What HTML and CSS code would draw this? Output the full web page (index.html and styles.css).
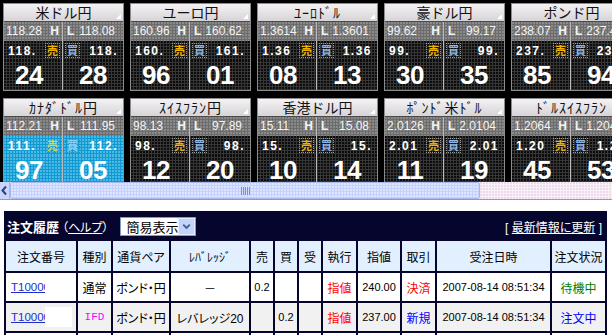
FILE: index.html
```html
<!DOCTYPE html>
<html lang="ja">
<head>
<meta charset="utf-8">
<title>レート・注文履歴</title>
<link rel="stylesheet" href="styles.css">
</head>
<body>
<div class="board">
  <div class="tiles">
    <div class="trow">
      <div class="tile">
        <div class="tname">米ドル円</div>
        <div class="hl"><div class="a"><span>118.28</span><b>H</b></div><div class="b"><b>L</b><span>118.08</span></div></div>
        <div class="px"><div class="a"><span>118.</span><span class="mk sell">売</span></div><div class="b"><span class="mk buy">買</span><span>118.</span></div></div>
        <div class="big"><div class="a">24</div><div class="b">28</div></div>
      </div>
      <div class="tile">
        <div class="tname">ユーロ円</div>
        <div class="hl"><div class="a"><span>160.96</span><b>H</b></div><div class="b"><b>L</b><span>160.62</span></div></div>
        <div class="px"><div class="a"><span>160.</span><span class="mk sell">売</span></div><div class="b"><span class="mk buy">買</span><span>161.</span></div></div>
        <div class="big"><div class="a">96</div><div class="b">01</div></div>
      </div>
      <div class="tile">
        <div class="tname hw">ﾕｰﾛﾄﾞﾙ</div>
        <div class="hl"><div class="a"><span>1.3614</span><b>H</b></div><div class="b"><b>L</b><span>1.3601</span></div></div>
        <div class="px"><div class="a"><span>1.36</span><span class="mk sell">売</span></div><div class="b"><span class="mk buy">買</span><span>1.36</span></div></div>
        <div class="big"><div class="a">08</div><div class="b">13</div></div>
      </div>
      <div class="tile">
        <div class="tname">豪ドル円</div>
        <div class="hl"><div class="a"><span>99.62</span><b>H</b></div><div class="b"><b>L</b><span>99.17</span></div></div>
        <div class="px"><div class="a"><span>99.</span><span class="mk sell">売</span></div><div class="b"><span class="mk buy">買</span><span>99.</span></div></div>
        <div class="big"><div class="a">30</div><div class="b">35</div></div>
      </div>
      <div class="tile">
        <div class="tname">ポンド円</div>
        <div class="hl"><div class="a"><span>238.07</span><b>H</b></div><div class="b"><b>L</b><span>237.45</span></div></div>
        <div class="px"><div class="a"><span>237.</span><span class="mk sell">売</span></div><div class="b"><span class="mk buy">買</span><span>237.</span></div></div>
        <div class="big"><div class="a">85</div><div class="b">94</div></div>
      </div>
    </div>
    <div class="trow">
      <div class="tile hot">
        <div class="tname hw">ｶﾅﾀﾞﾄﾞﾙ円</div>
        <div class="hl"><div class="a"><span>112.21</span><b>H</b></div><div class="b"><b>L</b><span>111.95</span></div></div>
        <div class="px"><div class="a"><span>111.</span><span class="mk sell">売</span></div><div class="b"><span class="mk buy">買</span><span>112.</span></div></div>
        <div class="big"><div class="a">97</div><div class="b">05</div></div>
      </div>
      <div class="tile">
        <div class="tname hw">ｽｲｽﾌﾗﾝ円</div>
        <div class="hl"><div class="a"><span>98.13</span><b>H</b></div><div class="b"><b>L</b><span>97.89</span></div></div>
        <div class="px"><div class="a"><span>98.</span><span class="mk sell">売</span></div><div class="b"><span class="mk buy">買</span><span>98.</span></div></div>
        <div class="big"><div class="a">12</div><div class="b">20</div></div>
      </div>
      <div class="tile">
        <div class="tname">香港ドル円</div>
        <div class="hl"><div class="a"><span>15.11</span><b>H</b></div><div class="b"><b>L</b><span>15.08</span></div></div>
        <div class="px"><div class="a"><span>15.</span><span class="mk sell">売</span></div><div class="b"><span class="mk buy">買</span><span>15.</span></div></div>
        <div class="big"><div class="a">10</div><div class="b">14</div></div>
      </div>
      <div class="tile">
        <div class="tname hw">ﾎﾟﾝﾄﾞ米ﾄﾞﾙ</div>
        <div class="hl"><div class="a"><span>2.0126</span><b>H</b></div><div class="b"><b>L</b><span>2.0104</span></div></div>
        <div class="px"><div class="a"><span>2.01</span><span class="mk sell">売</span></div><div class="b"><span class="mk buy">買</span><span>2.01</span></div></div>
        <div class="big"><div class="a">11</div><div class="b">19</div></div>
      </div>
      <div class="tile">
        <div class="tname hw">ﾄﾞﾙｽｲｽﾌﾗﾝ</div>
        <div class="hl"><div class="a"><span>1.2064</span><b>H</b></div><div class="b"><b>L</b><span>1.2049</span></div></div>
        <div class="px"><div class="a"><span>1.20</span><span class="mk sell">売</span></div><div class="b"><span class="mk buy">買</span><span>1.20</span></div></div>
        <div class="big"><div class="a">45</div><div class="b">53</div></div>
      </div>
    </div>
  </div>
  <div class="hscroll">
    <div class="sb-arrow"><svg width="10" height="17" viewBox="0 0 10 17"><path d="M6 4.5 L2.5 8.5 L6 12.5" fill="none" stroke="#2b3f86" stroke-width="2"/></svg></div>
    <div class="sb-thumb"><svg width="9" height="8" viewBox="0 0 9 8"><path d="M0.5 0 V8 M2.5 0 V8 M4.5 0 V8 M6.5 0 V8 M8.5 0 V8" stroke="#7d8fd0" stroke-width="1"/></svg></div>
    <div class="sb-track"></div>
  </div>
</div>

<div class="orders">
  <div class="bar">
    <b class="title">注文履歴</b>
    <span class="help">（<a href="#">ヘルプ</a>）</span>
    <div class="sel"><span class="sel-text">簡易表示</span><span class="sel-btn"><svg width="16" height="15" viewBox="0 0 16 15"><path d="M4.5 5.5 L8 9 L11.5 5.5" fill="none" stroke="#4a5d8e" stroke-width="2"/></svg></span></div>
    <span class="refresh">[ <a href="#">最新情報に更新</a> ]</span>
  </div>
  <div class="tbl">
    <div class="th">注文番号</div>
    <div class="th">種別</div>
    <div class="th">通貨ペア</div>
    <div class="th">ﾚﾊﾞﾚｯｼﾞ</div>
    <div class="th">売</div>
    <div class="th">買</div>
    <div class="th">受</div>
    <div class="th">執行</div>
    <div class="th">指値</div>
    <div class="th">取引</div>
    <div class="th">受注日時</div>
    <div class="th">注文状況</div>

    <div class="td id"><a class="oid" href="#">T100001234</a></div>
    <div class="td">通常</div>
    <div class="td">ポンド・円</div>
    <div class="td">－</div>
    <div class="td num">0.2</div>
    <div class="td"></div>
    <div class="td"></div>
    <div class="td red">指値</div>
    <div class="td num">240.00</div>
    <div class="td red">決済</div>
    <div class="td num">2007-08-14 08:51:34</div>
    <div class="td green">待機中</div>

    <div class="td alt id"><a class="oid" href="#">T100001235</a><span class="mask"></span></div>
    <div class="td alt ifd">IFD</div>
    <div class="td alt">ポンド・円</div>
    <div class="td alt">レバレッジ20</div>
    <div class="td alt"></div>
    <div class="td alt num">0.2</div>
    <div class="td alt"></div>
    <div class="td alt red">指値</div>
    <div class="td alt num">237.00</div>
    <div class="td alt blue">新規</div>
    <div class="td alt num">2007-08-14 08:51:34</div>
    <div class="td alt blue">注文中</div>

    <div class="td"></div>
    <div class="td"></div>
    <div class="td"></div>
    <div class="td"></div>
    <div class="td"></div>
    <div class="td"></div>
    <div class="td"></div>
    <div class="td"></div>
    <div class="td"></div>
    <div class="td"></div>
    <div class="td"></div>
    <div class="td"></div>
  </div>
</div>
</body>
</html>
```
FILE: styles.css
```css
* { box-sizing: border-box; }

html, body {
  margin: 0;
  padding: 0;
}

body {
  width: 612px;
  height: 335px;
  overflow: hidden;
  background: #ffffff;
  font-family: "Liberation Sans", "Noto Sans CJK JP", sans-serif;
  font-feature-settings: "palt";
}

/* ---------- rate board ---------- */
.board {
  background: #000;
  height: 200px;
  display: flex;
  flex-direction: column;
}

.tiles {
  height: 182px;
  overflow: hidden;
  padding: 3px 0 0 3px;
  display: flex;
  flex-direction: column;
  gap: 7px;
}

.trow {
  display: flex;
  gap: 6px;
}

.tile {
  flex: none;
  width: 121px;
  height: 88px;
  border: 1px solid #8c8c8c;
  display: grid;
  grid-template-rows: 18px 19px 19px 30px;
  background: #333;
}

.tname {
  position: relative;
  background: linear-gradient(#f4f2f4, #d6d4d6);
  border-bottom: 1px solid #4a4a4a;
  color: #111;
  font-family: "Noto Sans CJK JP", sans-serif;
  font-feature-settings: normal;
  font-size: 14px;
  line-height: 17px;
  text-align: center;
  white-space: nowrap;
}

.tname.hw {
  letter-spacing: 1px;
}

.tname::after {
  content: "";
  position: absolute;
  right: 2px;
  bottom: 2px;
  width: 0;
  height: 0;
  border-left: 5px solid transparent;
  border-bottom: 5px solid #ffffff;
}

.hl, .px, .big {
  display: grid;
  grid-template-columns: 58px 1fr;
}

.hl .b, .px .b, .big .b {
  border-left: 1px solid #b8b8b8;
}

.hl {
  background-color: #6c6c6c;
  background-image: radial-gradient(circle at 1px 1px, #8a8a8a 0.7px, transparent 1px);
  background-size: 3px 3px;
  color: #f4f4f4;
  font-size: 12px;
  line-height: 19px;
}

.hl .a, .hl .b {
  display: flex;
  justify-content: space-between;
  white-space: nowrap;
}

.hl .a { padding: 0 3px 0 2px; }
.hl .b { padding: 0 8px 0 4px; }

.px, .big {
  background-color: #363636;
  background-image: radial-gradient(circle at 1px 1px, #0c0c0c 0.8px, transparent 1.1px);
  background-size: 3px 3px;
  color: #ffffff;
}

.px {
  font-size: 12px;
  font-weight: bold;
  letter-spacing: 1.5px;
}

.px .a, .px .b {
  display: flex;
  align-items: center;
  justify-content: space-between;
  white-space: nowrap;
}

.px .a { padding: 0 2px 0 4px; }
.px .b { padding: 0 5px 0 2px; }

.mk {
  flex: none;
  width: 15px;
  height: 15px;
  border: 1px dotted #9a9a9a;
  font-family: "Noto Sans CJK JP", sans-serif;
  font-size: 11px;
  line-height: 13px;
  letter-spacing: 0;
  text-align: center;
  font-weight: bold;
}

.sell { color: #f0b400; }
.buy { color: #8ab6e6; }

.big {
  font-size: 26px;
  font-weight: bold;
  line-height: 30px;
  text-align: center;
  letter-spacing: -0.5px;
}

.big .a { padding-right: 8px; }

.tile.hot .px, .tile.hot .big {
  background-color: #0f9ad3;
  background-image: radial-gradient(circle at 1px 1px, #4cb8e4 0.8px, transparent 1.1px);
}

.tile.hot .mk { border-color: #b8643a; }
.tile.hot .sell { color: #d4d84a; }
.tile.hot .buy { color: #8ed0f4; }

/* ---------- horizontal scrollbar ---------- */
.hscroll {
  height: 18px;
  display: flex;
  background: #f6f0f6;
  border-bottom: 1px solid #9c9c9c;
}

.sb-arrow {
  width: 10px;
  background: #c8d5fb;
  border-right: 1px solid #a8b6e6;
}

.sb-arrow svg { display: block; }

.sb-thumb {
  width: 470px;
  background-color: #c6d2fe;
  background-image: radial-gradient(circle at 1px 1px, #dde5ff 0.7px, transparent 1px);
  background-size: 3px 3px;
  border: 1px solid #a9b8ec;
  border-radius: 2px;
  display: flex;
  align-items: center;
  justify-content: center;
}

.sb-track {
  flex: 1;
  background-color: #f7f2f7;
  background-image: radial-gradient(circle at 1px 1px, #f0d8ec 0.7px, transparent 1px);
  background-size: 3px 3px;
}

/* ---------- orders ---------- */
.orders {
  margin: 11px 0 0 4px;
  width: 603px;
  background: #05052e;
}

.bar {
  height: 30px;
  display: flex;
  align-items: center;
  padding: 0 5px 0 3px;
  color: #ffffff;
  font-size: 13px;
}

.bar a { color: #ffffff; }

.title {
  font-family: "Noto Sans CJK JP", sans-serif;
  font-weight: bold;
  font-size: 13px;
}

.help {
  margin-left: 3px;
  font-size: 12px;
}

.sel {
  margin-left: 12px;
  width: 76px;
  height: 19px;
  background: #ffffff;
  border: 1px solid #7f9db9;
  display: flex;
  align-items: center;
  justify-content: space-between;
  padding-left: 5px;
  color: #000;
  font-size: 13px;
}

.sel-btn {
  width: 17px;
  height: 17px;
  background: #c3d3fa;
  border: 1px solid #e4ecff;
  display: flex;
  align-items: center;
  justify-content: center;
}

.sel-btn svg { display: block; }

.refresh {
  margin-left: auto;
  font-size: 12px;
}

.tbl {
  display: grid;
  grid-template-columns: 70px 33px 56px 78px 22px 22px 22px 33px 42px 33px 113px 53px;
  grid-template-rows: 30px;
  grid-auto-rows: 28px;
  gap: 2px;
  padding: 0 2px 2px;
  font-size: 12px;
}

.th, .td {
  display: flex;
  align-items: center;
  justify-content: center;
  white-space: nowrap;
  overflow: hidden;
  color: #000;
}

.th {
  background-color: #c4e0fc;
  background-image: radial-gradient(circle at 1px 1px, #e2f0ff 0.7px, transparent 1px);
  background-size: 2px 2px;
}

.td { background: #ffffff; }

.td.alt {
  background-color: #d2d2d2;
  background-image: radial-gradient(circle at 1px 1px, #f2f2f2 0.7px, transparent 1px);
  background-size: 2px 2px;
}

.td.id {
  justify-content: flex-start;
  padding-left: 5px;
}

.oid {
  display: block;
  width: 34px;
  overflow: hidden;
  color: #1a2fd0;
  font-size: 11.5px;
}

.mask {
  width: 27px;
  height: 20px;
  background: #ffffff;
}

.num { font-size: 11px; }

.red { color: #ff0000; }
.blue { color: #0000ff; }
.green { color: #008000; }

.ifd {
  color: #ff00ff;
  font-family: "Liberation Mono", monospace;
  font-size: 11px;
}
```
